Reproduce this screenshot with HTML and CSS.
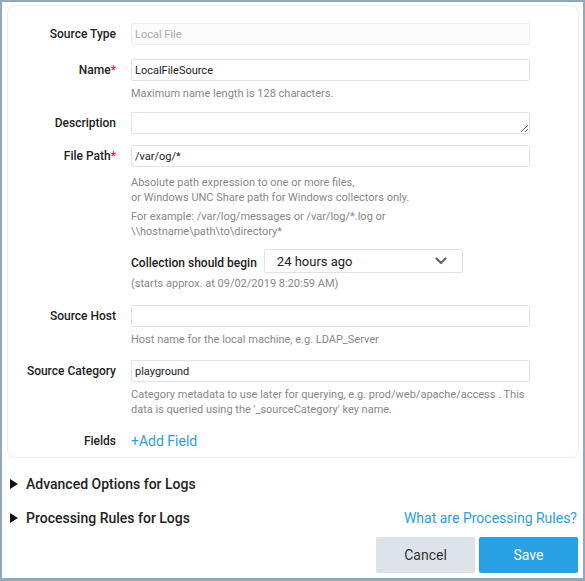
FILE: index.html
```html
<!DOCTYPE html>
<html lang="en">

<head>
    <meta charset="UTF-8">
    <meta name="viewport" content="width=device-width, initial-scale=1.0">
    <title>Local File Source</title>
    <link rel="stylesheet" href="styles.css">
</head>

<body>
    <div class="window">
        <form class="card">
            <div class="row row-first">
                <label class="label">Source Type</label>
                <input class="input input-disabled" type="text" placeholder="Local File" disabled>
            </div>

            <div class="row">
                <label class="label">Name<span class="req">*</span></label>
                <input class="input" type="text" value="LocalFileSource">
                <p class="hint">Maximum name length is 128 characters.</p>
            </div>

            <div class="row">
                <label class="label">Description</label>
                <textarea class="input textarea"></textarea>
            </div>

            <div class="row">
                <label class="label">File Path<span class="req">*</span></label>
                <input class="input" type="text" value="/var/og/*">
                <p class="hint hint-path">Absolute path expression to one or more files,<br>or Windows UNC Share path for Windows collectors only.</p>
                <p class="hint hint-example">For example: /var/log/messages or /var/log/*.log or<br>\\hostname\path\to\directory*</p>
            </div>

            <div class="row row-collection">
                <div class="collection">
                    <span class="collection-label">Collection should begin</span>
                    <div class="select">
                        <span>24 hours ago</span>
                        <svg width="12" height="8" viewBox="0 0 12 8">
                            <path d="M1.5 1.5 L6 6 L10.5 1.5" fill="none" stroke="#666" stroke-width="2.2" stroke-linecap="round" stroke-linejoin="round"/>
                        </svg>
                    </div>
                </div>
                <p class="hint hint-tight">(starts approx. at 09/02/2019 8:20:59 AM)</p>
            </div>

            <div class="row row-host">
                <label class="label">Source Host</label>
                <input class="input" type="text">
                <p class="hint">Host name for the local machine, e.g. LDAP_Server</p>
            </div>

            <div class="row row-category">
                <label class="label">Source Category</label>
                <input class="input" type="text" value="playground">
                <p class="hint">Category metadata to use later for querying, e.g. prod/web/apache/access . This data is queried using the '_sourceCategory' key name.</p>
            </div>

            <div class="row row-fields">
                <label class="label label-fields">Fields</label>
                <a class="add-field" href="#">+Add Field</a>
            </div>
        </form>

        <div class="section section-advanced">
            <span class="caret"></span>
            <span class="section-title">Advanced Options for Logs</span>
        </div>

        <div class="section section-rules">
            <span class="caret"></span>
            <span class="section-title">Processing Rules for Logs</span>
            <a class="help-link" href="#">What are Processing Rules?</a>
        </div>

        <div class="actions">
            <button type="button" class="btn btn-cancel">Cancel</button>
            <button type="button" class="btn btn-save">Save</button>
        </div>
    </div>
</body>

</html>
```

FILE: styles.css
```css
* {
    box-sizing: border-box;
}

body {
    margin: 0;
    padding: 0;
    font-family: Roboto, "Liberation Sans", Arial, sans-serif;
    background-color: white;
    color: #222222;
}

.window {
    width: 585px;
    height: 581px;
    border: 2px solid #8fabbb;
    border-bottom-width: 3px;
    padding: 3px 4px 0 5px;
    display: flex;
    flex-direction: column;
}

/* Form card */
.card {
    border: 1px solid #eceeef;
    border-radius: 8px;
    padding: 17px 0 8px 0;
    height: 453px;
    display: flex;
    flex-direction: column;
    gap: 11px;
}

.row {
    display: grid;
    grid-template-columns: 108px 399px;
    column-gap: 15px;
    align-items: start;
}

.row-first {
    margin-bottom: 3px;
}

.label {
    grid-column: 1;
    text-align: right;
    font-size: 12px;
    font-weight: 500;
    line-height: 22px;
    color: #222222;
}

.req {
    color: #e8202a;
}

.input {
    grid-column: 2;
    height: 22px;
    margin: 0;
    border: 1px solid #dfe4e7;
    border-radius: 2px;
    padding: 0 3px;
    font-family: inherit;
    font-size: 11px;
    color: #222222;
    background-color: white;
    outline: none;
}

.input-disabled {
    background-color: #fcfcfc;
    border-color: #eceeef;
}

.input-disabled::placeholder {
    color: #aaaaaa;
}

.textarea {
    display: block;
    resize: vertical;
    min-height: 22px;
}

.hint {
    grid-column: 2;
    margin: 5px 0 0 0;
    font-size: 11px;
    line-height: 15px;
    color: #888888;
}

.hint-path {
    margin-top: 8px;
}

.hint-example {
    margin-top: 4px;
}

.hint-tight {
    margin-top: 3px;
}

/* Collection start */
.row-collection {
    margin-top: -1px;
    margin-bottom: 2px;
}

.collection {
    grid-column: 2;
    display: flex;
    align-items: center;
    gap: 7px;
}

.collection-label {
    font-size: 12px;
    font-weight: 500;
    padding-top: 4px;
}

.select {
    width: 199px;
    height: 24px;
    border: 1px solid #dfe4e7;
    border-radius: 2px;
    padding: 0 15px 0 12px;
    display: flex;
    align-items: center;
    justify-content: space-between;
    font-size: 13px;
    color: #222222;
}

.row-host {
    margin-top: 1px;
}

.row-category {
    margin-top: 2px;
}

.row-fields {
    margin-top: 4px;
    align-items: center;
}

.label-fields {
    line-height: 18px;
}

.add-field {
    grid-column: 2;
    font-size: 14px;
    line-height: 18px;
    color: #2d9ee0;
    text-decoration: none;
}

/* Collapsible sections */
.section {
    display: flex;
    align-items: center;
    height: 20px;
    padding-left: 3px;
}

.section-advanced {
    margin-top: 16px;
}

.section-rules {
    margin-top: 14px;
}

.caret {
    width: 0;
    height: 0;
    border-top: 5px solid transparent;
    border-bottom: 5px solid transparent;
    border-left: 8px solid #111111;
    margin-right: 8px;
}

.section-title {
    font-size: 14px;
    font-weight: 500;
    color: #222222;
}

.help-link {
    margin-left: auto;
    margin-right: 2px;
    font-size: 14px;
    color: #2d9ee0;
    text-decoration: none;
}

/* Buttons */
.actions {
    display: flex;
    justify-content: flex-end;
    gap: 4px;
    margin-top: 9px;
    padding-right: 1px;
}

.btn {
    width: 99px;
    height: 36px;
    border: none;
    border-radius: 2px;
    font-family: inherit;
    font-size: 14px;
    cursor: pointer;
}

.btn-cancel {
    background-color: #dde3e8;
    color: #333333;
}

.btn-save {
    background-color: #28a0e3;
    color: white;
}
```
